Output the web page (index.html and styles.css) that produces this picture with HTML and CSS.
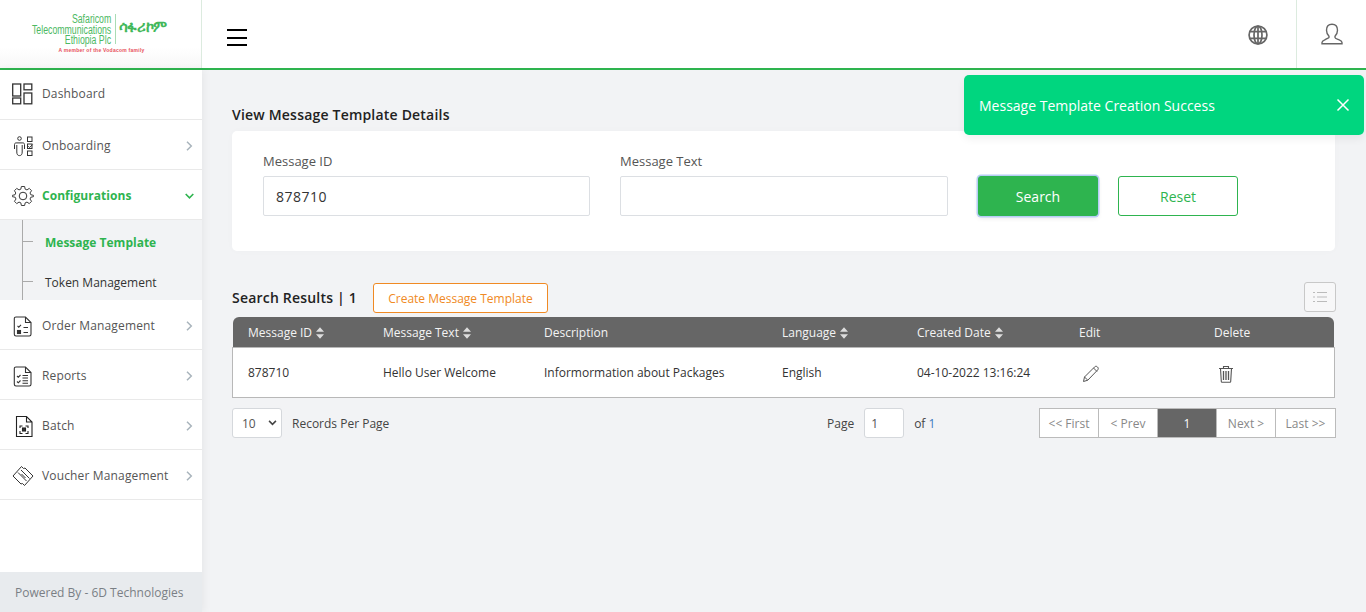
FILE: index.html
```html
<!DOCTYPE html>
<html lang="en">
<head>
<meta charset="utf-8">
<title>View Message Template Details</title>
<link rel="stylesheet" href="styles.css">
</head>
<body>
<header class="topbar">
  <div class="logo">
    <div class="logo-row">
      <div class="logo-en"><span>Safaricom</span><span>Telecommunications</span><span>Ethiopia Plc</span></div>
      <div class="logo-am">ሳፋሪኮም</div>
    </div>
    <div class="logo-tag">A member of the Vodacom family</div>
  </div>
  <button class="burger" aria-label="Menu"><span></span><span></span><span></span></button>
  <div class="top-right">
    <div class="globe">
      <svg width="20" height="20" viewBox="0 0 22 22" fill="none" stroke="#666" stroke-width="1.900"><circle cx="11" cy="11" r="9.800"/><ellipse cx="11" cy="11" rx="4.400" ry="9.800"/><path d="M11 1.200v19.600M2.200 7.400h17.600M2.200 14.600h17.600"/></svg>
    </div>
    <div class="user">
      <svg width="22" height="22" viewBox="0 0 22 22" fill="none" stroke="#666" stroke-width="1.400"><path d="M8 13.200c-1.600-1.600-2.500-3.600-2.500-6C5.500 3.500 7.800 1.200 11 1.200s5.500 2.300 5.500 6c0 2.400-.9 4.400-2.500 6v1.300c0 1 2 1.500 4.200 2.400 1.800.7 2.800 1.500 2.800 2.500v1.300H1v-1.300c0-1 1-1.800 2.800-2.500C6 15.500 8 15 8 14.500z"/></svg>
    </div>
  </div>
</header>

<div class="shell">
  <aside class="sidebar">
    <nav class="menu">
      <a class="item first">
        <svg class="ico" width="22" height="22" viewBox="0 0 22 22" fill="none" stroke="#333" stroke-width="1.300"><rect x=".7" y="1" width="8" height="12"/><rect x="12" y="1" width="7.800" height="5.800"/><rect x=".7" y="15" width="8" height="5.800"/><rect x="12" y="10" width="7.800" height="10.800"/></svg>
        <span class="label">Dashboard</span>
      </a>
      <a class="item">
        <svg class="ico" width="22" height="22" viewBox="0 0 22 22" fill="none" stroke="#333" stroke-width="1"><circle cx="7.500" cy="3.500" r="1.800"/><path d="M2.500 14V9.500c0-1 .7-1.600 1.600-1.600h6.800c1 0 1.600.6 1.600 1.600V14"/><path d="M4.800 10v7c0 2.500 1 3.600 2.700 3.600s2.700-1.100 2.700-3.600v-7"/><rect x="15.500" y="2" width="4.500" height="4.500"/><rect x="15.500" y="9" width="4.500" height="4.500"/><rect x="15.500" y="16" width="4.500" height="4.500"/><path d="M16.300 11.200l1.300 1.300 3-3"/></svg>
        <span class="label">Onboarding</span>
        <svg class="chev" width="7" height="10" viewBox="0 0 7 10" fill="none" stroke="#a9b4bc" stroke-width="1.500"><path d="M1 .7l4.300 4.300L1 9.300"/></svg>
      </a>
      <a class="item active">
        <svg class="ico" width="22" height="22" viewBox="0 0 22 22" fill="none" stroke="#333" stroke-width="1"><circle cx="11" cy="11" r="3.800"/><path d="M9.300 1h3.400l.6 2.800 1.900.8 2.400-1.600 2.400 2.400-1.600 2.400.8 1.900 2.800.6v1.400l-2.800.6-.8 1.900 1.600 2.400-2.400 2.400-2.400-1.600-1.900.8-.6 2.800H9.300l-.6-2.800-1.900-.8-2.400 1.600-2.400-2.400 1.600-2.400-.8-1.900L-.2 11.700v-1.400l2.800-.6.8-1.900L2 5.400 4.400 3l2.400 1.600 1.900-.8z" transform="translate(.55 .55) scale(.95)"/></svg>
        <span class="label">Configurations</span>
        <svg class="chev chev-open" width="9" height="6" viewBox="0 0 9 6" fill="none" stroke="#2eb44f" stroke-width="1.600"><path d="M.7 1l3.800 3.800L8.300 1"/></svg>
      </a>
      <div class="submenu">
        <a class="sub current">Message Template</a>
        <a class="sub">Token Management</a>
      </div>
      <a class="item">
        <svg class="ico" width="22" height="22" viewBox="0 0 22 22" fill="none" stroke="#333" stroke-width="1.100"><path d="M4 2h9.500L19 7.500v11.800c0 1-.7 1.700-1.700 1.700H4c-1 0-1.700-.7-1.700-1.700V3.700C2.300 2.700 3 2 4 2zM13.500 2v5.500H19"/><path d="M5.500 10.800l1.300 1.300L9 9.800M11.500 12.500h4.500M11.500 17.500h4.500"/><rect x="5.500" y="15.500" width="3" height="3" fill="#333"/></svg>
        <span class="label">Order Management</span>
        <svg class="chev" width="7" height="10" viewBox="0 0 7 10" fill="none" stroke="#a9b4bc" stroke-width="1.500"><path d="M1 .7l4.300 4.300L1 9.300"/></svg>
      </a>
      <a class="item">
        <svg class="ico" width="22" height="22" viewBox="0 0 22 22" fill="none" stroke="#333" stroke-width="1.100"><path d="M4 2h9.500L19 7.500v11.800c0 1-.7 1.700-1.700 1.700H4c-1 0-1.700-.7-1.700-1.700V3.700C2.300 2.700 3 2 4 2zM13.500 2v5.500H19"/><path d="M5 11l1.300 1.300L8.500 10M5 16.500l1.300 1.300 2.200-2.300M10.500 10.500H16M10.500 13H16M10.500 15.800H16M10.500 18.200H16"/></svg>
        <span class="label">Reports</span>
        <svg class="chev" width="7" height="10" viewBox="0 0 7 10" fill="none" stroke="#a9b4bc" stroke-width="1.500"><path d="M1 .7l4.300 4.300L1 9.300"/></svg>
      </a>
      <a class="item">
        <svg class="ico" width="22" height="22" viewBox="0 0 22 22" fill="none" stroke="#222" stroke-width="1.100"><path d="M4.500 1.500h10l5.500 5.500v14.500H4.500zM14.500 1.500V7H20"/><path d="M8 13v-2h2.500M13.500 11H16v2M16 16v2.500h-2.500M10.500 18.500H8V16"/><rect x="10.500" y="13" width="3" height="3" fill="#333"/></svg>
        <span class="label">Batch</span>
        <svg class="chev" width="7" height="10" viewBox="0 0 7 10" fill="none" stroke="#a9b4bc" stroke-width="1.500"><path d="M1 .7l4.300 4.300L1 9.300"/></svg>
      </a>
      <a class="item">
        <svg class="ico" width="22" height="22" viewBox="0 0 22 22" fill="none" stroke="#333" stroke-width="1"><path d="M1 11L9.500 1.500l2 2 1.500-.5 8 8-8.500 9.500-2-2-1.500.5z"/><path d="M6 7.500l8.500 8.500M9 5l8.500 8.500M9.500 9l4 4"/></svg>
        <span class="label">Voucher Management</span>
        <svg class="chev" width="7" height="10" viewBox="0 0 7 10" fill="none" stroke="#a9b4bc" stroke-width="1.500"><path d="M1 .7l4.300 4.300L1 9.300"/></svg>
      </a>
    </nav>
    <footer class="powered">Powered By - 6D Technologies</footer>
  </aside>

  <main class="content">
    <h1 class="page-title">View Message Template Details</h1>
    <section class="card">
      <div class="field">
        <label class="field-label">Message ID</label>
        <input class="input" type="text" value="878710">
      </div>
      <div class="field">
        <label class="field-label">Message Text</label>
        <input class="input" type="text">
      </div>
      <button class="btn btn-search">Search</button>
      <button class="btn btn-reset">Reset</button>
    </section>

    <div class="results-head">
      <h2 class="results-title">Search Results | 1</h2>
      <button class="btn-create">Create Message Template</button>
      <button class="btn-list" aria-label="Columns">
        <svg width="14" height="12" viewBox="0 0 14 12" fill="none" stroke="#bbb" stroke-width="1.200"><path d="M0 1.500h2M4 1.500h10M0 6h2M4 6h10M0 10.500h2M4 10.500h10"/></svg>
      </button>
    </div>

    <div class="table">
      <div class="row head">
        <div class="c c1">Message ID <svg class="sort" width="8" height="12" viewBox="0 0 9 13" fill="#ddd"><path d="M4.500 0L9 5H0zM4.500 13L0 8h9z"/></svg></div>
        <div class="c c2">Message Text <svg class="sort" width="8" height="12" viewBox="0 0 9 13" fill="#ddd"><path d="M4.500 0L9 5H0zM4.500 13L0 8h9z"/></svg></div>
        <div class="c c3">Description</div>
        <div class="c c4">Language <svg class="sort" width="8" height="12" viewBox="0 0 9 13" fill="#ddd"><path d="M4.500 0L9 5H0zM4.500 13L0 8h9z"/></svg></div>
        <div class="c c5">Created Date <svg class="sort" width="8" height="12" viewBox="0 0 9 13" fill="#ddd"><path d="M4.500 0L9 5H0zM4.500 13L0 8h9z"/></svg></div>
        <div class="c c6">Edit</div>
        <div class="c c7">Delete</div>
      </div>
      <div class="row body">
        <div class="c c1">878710</div>
        <div class="c c2">Hello User Welcome</div>
        <div class="c c3">Informormation about Packages</div>
        <div class="c c4">English</div>
        <div class="c c5">04-10-2022 13:16:24</div>
        <div class="c c6"><svg class="act" width="18" height="18" viewBox="0 0 18 18" fill="none" stroke="#555" stroke-width="1"><path d="M1.500 16.500l1-4.500L12.500 2c1-1 2-1 3 0s1 2 .1 3L5.800 15.200zM2.500 12l3.300 3.200M11.500 3l3.500 3.500"/></svg></div>
        <div class="c c7"><svg class="act" width="16" height="18" viewBox="0 0 16 18" fill="none" stroke="#555" stroke-width="1.100"><path d="M1 3.500h14M5.500 3.500V1.500h5v2M2.500 3.500l.8 13c0 .5.3.8.8.8h7.800c.5 0 .8-.3.8-.8l.8-13"/><path d="M5.500 6v9M8 6v9M10.500 6v9" stroke-width="1.300"/></svg></div>
      </div>
    </div>

    <div class="pager-row">
      <div class="per-page">
        <div class="select">10 <svg width="9" height="6" viewBox="0 0 10 7" fill="none" stroke="#444" stroke-width="1.800"><path d="M1 1l4 4 4-4"/></svg></div>
        <span class="rpp">Records Per Page</span>
      </div>
      <div class="page-jump">
        <span>Page</span>
        <input class="page-input" type="text" value="1">
        <span>of <b class="of-num">1</b></span>
      </div>
      <div class="pager">
        <a class="pg">&lt;&lt; First</a>
        <a class="pg">&lt; Prev</a>
        <a class="pg on">1</a>
        <a class="pg">Next &gt;</a>
        <a class="pg">Last &gt;&gt;</a>
      </div>
    </div>
  </main>
</div>

<div class="toast">
  <span>Message Template Creation Success</span>
  <svg width="14" height="14" viewBox="0 0 14 14" fill="none" stroke="#fff" stroke-width="1.500"><path d="M1.500 1.500l11 11M12.500 1.500l-11 11"/></svg>
</div>
</body>
</html>
```

FILE: styles.css
```css
* { box-sizing: border-box; }
html, body { height: 100%; }
body {
  margin: 0;
  background: #f2f3f5;
  font-family: "Open Sans", "Noto Sans", sans-serif;
  font-size: 12px;
  color: #333;
  overflow: hidden;
}
.topbar {
  height: 70px;
  background: #fff;
  border-bottom: 2px solid #2eb44f;
  display: flex;
  align-items: stretch;
}
.logo {
  width: 202px;
  border-right: 1px solid #dcebdf;
  background: linear-gradient(#fff 70%, #f7f7f7);
  padding-top: 14px;
  display: flex;
  flex-direction: column;
  align-items: center;
}
.logo-row { display: flex; align-items: stretch; width: 134px; height: 30px; }
.logo-en {
  width: 82px;
  flex: none;
  display: flex;
  flex-direction: column;
  align-items: flex-end;
  font-family: "Liberation Sans", sans-serif;
  font-size: 12.500px;
  line-height: 10.500px;
  color: #4cb963;
  padding-right: 3px;
  border-right: 1px solid #a9dcb4;
  white-space: nowrap;
}
.logo-en span { display: block; transform: scaleX(0.7); transform-origin: right center; }
.logo-am {
  font-family: "Noto Sans", "DejaVu Sans", sans-serif;
  font-weight: 700;
  font-size: 15px;
  line-height: 24px;
  color: #43b85b;
  padding-left: 3px;
  letter-spacing: -0.3px;
  white-space: nowrap;
}
.logo-tag {
  font-family: "Liberation Sans", sans-serif;
  font-size: 5px;
  line-height: 8px;
  margin-top: 2px;
  margin-left: 2px;
  letter-spacing: 0.25px;
  color: #e8505b;
  font-weight: 700;
}
.burger {
  border: 0;
  background: none;
  padding: 0;
  margin: 29px 0 0 25px;
  width: 20px;
  height: 17px;
  display: flex;
  flex-direction: column;
  justify-content: space-between;
}
.burger span { display: block; height: 2px; background: #000; }
.top-right { margin-left: auto; display: flex; align-items: stretch; }
.globe { width: 70px; padding-top: 25px; padding-left: 21px; border-right: 1px solid #dcebdf; }
.user { width: 69px; padding-top: 23px; padding-left: 24px; }

.shell { display: flex; height: 542px; }
.sidebar {
  width: 202px;
  flex: none;
  background: #fff;
  display: flex;
  flex-direction: column;
  justify-content: space-between;
  box-shadow: 2px 0 8px rgba(0, 0, 0, 0.05);
}
.item {
  height: 50px;
  display: flex;
  align-items: center;
  padding: 2px 9px 0 12px;
  border-bottom: 1px solid #e9e9e9;
  font-size: 12px;
  letter-spacing: 0.15px;
  color: #555;
}
.first { padding: 0 9px 2px 12px; }
.ico { flex: none; margin-right: 8px; }
.label { flex: 1; }
.chev { flex: none; }
.chev-open { margin-right: -1px; }
.active { color: #2eb44f; font-weight: 700; letter-spacing: 0.05px; }
.submenu {
  height: 80px;
  background: #f2f3f5;
  display: flex;
  flex-direction: column;
}
.sub {
  height: 40px;
  margin-left: 22px;
  border-left: 1px solid #aaa;
  display: flex;
  align-items: center;
  padding: 4px 0 0 22px;
  font-size: 12px;
  color: #333;
  position: relative;
}
.sub::before {
  content: "";
  position: absolute;
  left: 0;
  top: 21px;
  width: 10px;
  height: 1px;
  background: #aaa;
}
.current { color: #2eb44f; font-weight: 700; }
.powered {
  height: 40px;
  background: #e8ebee;
  color: #7a7f85;
  font-size: 12px;
  display: flex;
  align-items: center;
  padding-left: 15px;
}

.content { flex: 1; padding: 35px 31px 0 30px; min-width: 0; }
.page-title {
  margin: 0;
  font-size: 14px;
  line-height: 20px;
  font-weight: 600;
  color: #222;
  height: 26px;
  letter-spacing: 0.2px;
}
.card {
  height: 120px;
  background: #fff;
  border-radius: 5px;
  display: flex;
  padding: 20px 0 0 31px;
  box-shadow: 0 0 8px rgba(0, 0, 0, 0.02);
}
.field { width: 327px; margin-right: 30px; }
.field:nth-child(2) { width: 328px; }
.field-label { display: block; font-size: 13px; line-height: 20px; color: #555; margin-bottom: 5px; }
.input {
  display: block;
  width: 100%;
  height: 40px;
  border: 1px solid #dcdfe3;
  border-radius: 2px;
  padding: 0 12px;
  font: 14px "Open Sans", sans-serif;
  letter-spacing: 0.5px;
  color: #333;
  background: #fff;
}
.btn {
  width: 120px;
  height: 40px;
  margin-top: 25px;
  border-radius: 3px;
  font: 14px "Open Sans", sans-serif;
}
.btn-search {
  background: #2eb44f;
  color: #fff;
  border: 1px solid #2eb44f;
  box-shadow: 0 0 0 1.500px #b6cdf5, 0 2px 5px rgba(0, 0, 0, 0.1);
}
.btn-reset { background: #fff; color: #2eb44f; border: 1px solid #2eb44f; margin-left: 20px; }

.results-head {
  display: flex;
  align-items: center;
  height: 30px;
  margin-top: 32px;
}
.results-title { margin: 0 0 1px; font-size: 14px; font-weight: 600; color: #222; letter-spacing: 0.2px; }
.btn-create {
  width: 175px;
  height: 30px;
  margin-left: 16px;
  background: #fff;
  border: 1px solid #f08a24;
  border-radius: 3px;
  color: #f08a24;
  font: 12px "Open Sans", sans-serif;
}
.btn-list {
  margin: -1px -1px 1px auto;
  width: 32px;
  height: 30px;
  background: #f7f7f8;
  border: 1px solid #c8c8c8;
  border-radius: 3px;
  padding: 0;
  display: flex;
  align-items: center;
  justify-content: center;
}
.table { margin-top: 4px; }
.row { display: grid; grid-template-columns: 135px 161px 238px 135px 161px 136px 1fr; align-items: center; }
.head {
  height: 30px;
  margin: 0 1px;
  background: #666;
  color: #f4f4f4;
  border-radius: 6px 6px 0 0;
  font-size: 12px;
}
.body {
  height: 51px;
  background: #fff;
  border: 1px solid #b8b8b8;
  color: #333;
}
.c { padding-left: 15px; white-space: nowrap; }
.head .c6 { padding-left: 16px; }
.body .c6 { padding: 3px 0 0 19px; }
.body .c7 { padding: 3px 0 0 19px; }
.sort { vertical-align: -2px; margin-left: 1px; }
.act { display: block; }

.pager-row {
  display: flex;
  align-items: center;
  margin-top: 10px;
  height: 30px;
}
.per-page { display: flex; align-items: center; width: 595px; }
.select {
  width: 50px;
  height: 30px;
  border: 1px solid #d5d8dc;
  border-radius: 3px;
  background: #fff;
  display: flex;
  align-items: center;
  justify-content: space-between;
  padding: 0 4px 0 9px;
  font-size: 12px;
  color: #555;
}
.rpp { margin-left: 10px; color: #444; }
.page-jump { display: flex; align-items: center; gap: 10px; color: #444; }
.page-input {
  width: 40px;
  height: 30px;
  border: 1px solid #d5d8dc;
  border-radius: 3px;
  background: #fff;
  padding: 0 6px;
  font: 12px "Open Sans", sans-serif;
  color: #555;
}
.of-num { font-weight: 400; color: #3a7abf; }
.pager { margin-left: auto; margin-right: -1px; display: flex; border: 1px solid #bbb; height: 30px; }
.pg {
  width: 59px;
  display: flex;
  align-items: center;
  justify-content: center;
  border-right: 1px solid #bbb;
  background: #fff;
  color: #888;
  font-size: 12px;
}
.pg:last-child { border-right: 0; }
.on { background: #666; color: #fff; }

.toast {
  position: absolute;
  left: 964px;
  top: 75px;
  width: 400px;
  height: 60px;
  background: #00d67f;
  border-radius: 5px;
  color: #fff;
  font-size: 14px;
  display: flex;
  align-items: center;
  justify-content: space-between;
  padding: 0 14px 0 15px;
  box-shadow: 0 4px 8px rgba(0, 0, 0, 0.06);
}
```
